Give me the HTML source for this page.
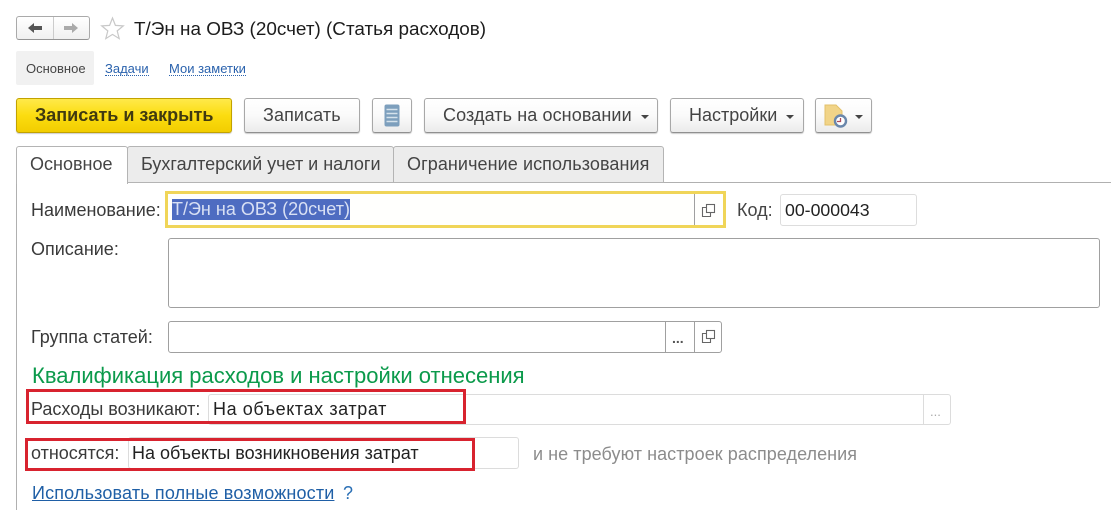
<!DOCTYPE html>
<html lang="ru"><head><meta charset="utf-8"><title>Статья расходов</title>
<style>
html,body{margin:0;padding:0;background:#fff;width:1111px;height:510px;overflow:hidden}
body{position:relative;font-family:"Liberation Sans",sans-serif;font-size:18px;color:#3a3a3a;filter:blur(.3px)}
.a{position:absolute;box-sizing:border-box}
.t{position:absolute;white-space:nowrap;line-height:20px;height:20px}
.b{position:absolute;box-sizing:border-box;top:98px;height:35px;border:1px solid #a8a8a8;border-bottom:1px solid #909090;border-radius:3px;background:linear-gradient(#fff 0%,#fafafa 50%,#ebebeb 100%);box-shadow:0 1px 1px #ccc;line-height:33px;white-space:nowrap;font-size:18px;color:#444}
.c{position:absolute;width:0;height:0;border-left:4px solid transparent;border-right:4px solid transparent;border-top:4px solid #444;top:115px}
.f{position:absolute;box-sizing:border-box;border:1px solid #a0a0a0;border-radius:3px;background:#fff}
.l{position:absolute;width:1px;background:#a0a0a0}
.tab{position:absolute;box-sizing:border-box;top:146px;height:37px;border:1px solid #b4b4b4;border-radius:3px 3px 0 0;background:#ececec;line-height:35px;white-space:nowrap;color:#444;font-size:18px}
</style></head><body>

<div class="a" style="left:16px;top:16px;width:74px;height:24px;border:1px solid #aaa;border-bottom-color:#949494;border-radius:3px;background:linear-gradient(#fff,#f0f0f0)"></div>
<div class="a" style="left:53px;top:17px;width:1px;height:22px;background:#ccc"></div>
<svg class="a" style="left:28px;top:22px" width="14" height="12" viewBox="0 0 14 12"><path d="M0 6L6 1V4H14V8H6V11Z" fill="#555"/></svg>
<svg class="a" style="left:64px;top:22px" width="14" height="12" viewBox="0 0 14 12"><path d="M14 6L8 1V4H0V8H8V11Z" fill="#aaa"/></svg>
<svg class="a" style="left:100px;top:16px" width="25" height="24" viewBox="0 0 25 24"><path d="M12.5 2L15.4 9.4L23.3 9.9L17.2 14.9L19.2 22.6L12.5 18.4L5.8 22.6L7.8 14.9L1.7 9.9L9.6 9.4Z" fill="#fff" stroke="#c8c8c8" stroke-width="1.2"/></svg>
<div class="t" style="left:134px;top:20px;font-size:18.9px;color:#1c1c1c">Т/Эн на ОВЗ (20счет) (Статья расходов)</div>

<div class="a" style="left:16px;top:51px;width:78px;height:34px;background:#f1f1f1;border-radius:2px"></div>
<div class="t" style="left:26px;top:59px;font-size:13px;color:#444">Основное</div>
<div class="t" style="left:105px;top:59px;font-size:13px;color:#2a62ad;line-height:19px;height:16px;border-bottom:1px dotted #2a62ad">Задачи</div>
<div class="t" style="left:169px;top:59px;font-size:13px;color:#2a62ad;line-height:19px;height:16px;border-bottom:1px dotted #2a62ad">Мои заметки</div>

<div class="b" style="left:16px;width:216px;padding-left:18px;background:linear-gradient(#ffe94a 0%,#fbdc10 50%,#f2cd00 100%);border-color:#c2a200;font-weight:bold;color:#403a10">Записать и закрыть</div>
<div class="b" style="left:244px;width:116px;padding-left:18px;letter-spacing:.1px">Записать</div>
<div class="b" style="left:372px;width:40px"></div>
<svg class="a" style="left:384px;top:104px" width="16" height="23" viewBox="0 0 16 23"><rect x="0.5" y="0.5" width="15" height="22" rx="2" fill="#7d9fbd"/><path d="M2.5 5.5H13.5M2.5 9.5H13.5M2.5 13.5H13.5M2.5 17.5H13.5" stroke="#d5e2ec" stroke-width="1.5"/></svg>
<div class="b" style="left:424px;width:234px;padding-left:18px;letter-spacing:.1px">Создать на основании</div><div class="c" style="left:641px"></div>
<div class="b" style="left:670px;width:134px;padding-left:18px">Настройки</div><div class="c" style="left:786px"></div>
<div class="b" style="left:815px;width:57px"></div><div class="c" style="left:855px"></div>
<svg class="a" style="left:824px;top:104px" width="24" height="24" viewBox="0 0 24 24"><path d="M1 1H12L18 7V21H1Z" fill="#f1d488" stroke="#e3c16a"/><circle cx="16.5" cy="17" r="5.5" fill="#fff" stroke="#6a87ab" stroke-width="2.4"/><path d="M16.5 14V17.5H13" stroke="#b04a5a" fill="none" stroke-width="1.3"/></svg>

<div class="a" style="left:127px;top:182px;width:984px;height:1px;background:#b0b0b0"></div>
<div class="a" style="left:16px;top:182px;width:1px;height:328px;background:#b0b0b0"></div>
<div class="tab" style="left:127px;width:267px;padding-left:13px">Бухгалтерский учет и налоги</div>
<div class="tab" style="left:393px;width:271px;padding-left:13px;letter-spacing:.08px">Ограничение использования</div>
<div class="tab" style="left:16px;width:112px;height:38px;background:#fff;border-bottom:none;padding-left:13px">Основное</div>

<div class="t" style="left:31px;top:200px">Наименование:</div>
<div class="a" style="left:165px;top:191px;width:561px;height:37px;border:3px solid #f0d558;background:#fffffd"></div>
<div class="t" style="left:172px;top:199px;height:21px;line-height:21px;background:#4e6cc1;color:#d8e0f4">Т/Эн на ОВЗ (20счет)</div>
<div class="l" style="left:694px;top:194px;height:31px"></div>
<svg class="a" style="left:701px;top:203px" width="15" height="15" viewBox="0 0 15 15" fill="none" stroke="#666" stroke-width="1.1"><rect x="5.5" y="1.5" width="8" height="8" /><path d="M5.5 4.5H1.5V13.5H9.5V9.5"/></svg>
<div class="t" style="left:737px;top:200px;color:#444">Код:</div>
<div class="f" style="left:780px;top:194px;width:137px;height:32px;border-color:#ddd"></div>
<div class="t" style="left:785px;top:200px;color:#222;font-size:17.7px">00-000043</div>

<div class="t" style="left:31px;top:239px">Описание:</div>
<div class="f" style="left:168px;top:238px;width:932px;height:70px"></div>

<div class="t" style="left:31px;top:327px">Группа статей:</div>
<div class="f" style="left:168px;top:321px;width:554px;height:32px"></div>
<div class="l" style="left:665px;top:321px;height:32px"></div>
<div class="l" style="left:694px;top:321px;height:32px"></div>
<div class="t" style="left:672px;top:328px;font-size:14px;font-weight:bold;color:#555">...</div>
<svg class="a" style="left:701px;top:329px" width="15" height="15" viewBox="0 0 15 15" fill="none" stroke="#666" stroke-width="1.1"><rect x="5.5" y="1.5" width="8" height="8" /><path d="M5.5 4.5H1.5V13.5H9.5V9.5"/></svg>

<div class="t" style="left:32px;top:366px;font-size:22px;color:#0b9a4b">Квалификация расходов и настройки отнесения</div>

<div class="f" style="left:208px;top:394px;width:743px;height:31px;border-color:#dcdcdc"></div>
<div class="a" style="left:923px;top:394px;width:1px;height:31px;background:#dcdcdc"></div>
<div class="t" style="left:930px;top:402px;font-size:13px;color:#aaa">...</div>
<div class="t" style="left:31px;top:399px">Расходы возникают:</div>
<div class="t" style="left:213px;top:399px;color:#222;letter-spacing:.6px">На объектах затрат</div>
<div class="a" style="left:26px;top:389px;width:440px;height:35px;border:3px solid #d8232f"></div>

<div class="f" style="left:128px;top:437px;width:391px;height:32px;border-color:#dcdcdc"></div>
<div class="t" style="left:31px;top:443px">относятся:</div>
<div class="t" style="left:132px;top:443px;color:#222">На объекты возникновения затрат</div>
<div class="a" style="left:25px;top:438px;width:450px;height:33px;border:3px solid #d8232f"></div>
<div class="t" style="left:533px;top:444px;color:#8c8c8c;letter-spacing:.06px">и не требуют настроек распределения</div>

<div class="t" style="left:32px;top:483px;color:#1f5fa6;text-decoration:underline;letter-spacing:.16px">Использовать полные возможности</div>
<div class="t" style="left:343px;top:483px;color:#2a6fb5">?</div>
</body></html>
